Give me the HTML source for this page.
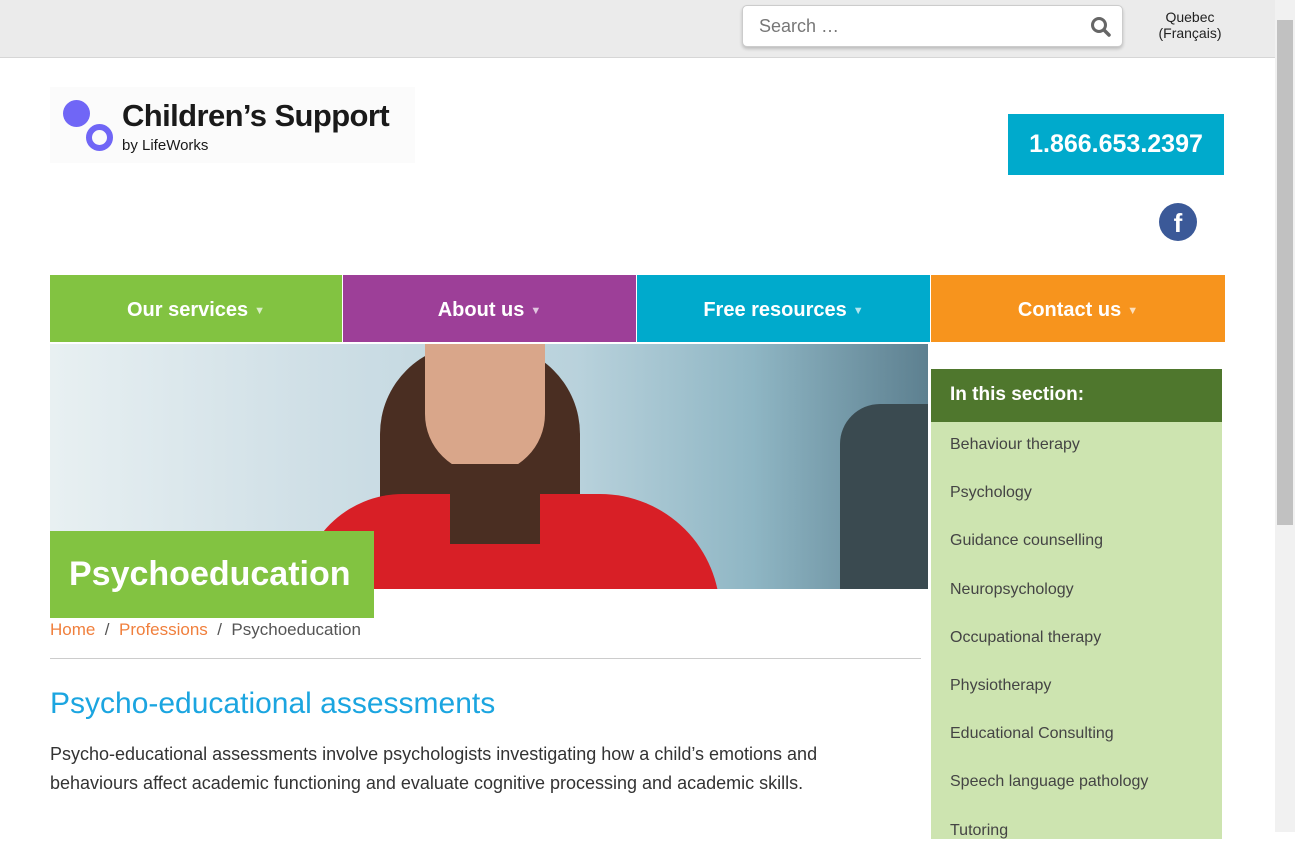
<!DOCTYPE html>
<html><head><meta charset="utf-8"><style>
*{margin:0;padding:0;box-sizing:border-box}
body{width:1295px;height:832px;overflow:hidden;background:#fff;font-family:"Liberation Sans",sans-serif;position:relative;color:#333}
.top{position:absolute;left:0;top:0;width:1275px;height:58px;background:#ebebeb;border-bottom:1px solid #d6d6d6}
.search{position:absolute;left:742px;top:5px;width:381px;height:42px;background:#fff;border:1px solid #ccc;border-radius:5px;box-shadow:0 2px 3px rgba(0,0,0,.2);font-size:18px;color:#777;padding:10px 16px}
.lang{position:absolute;left:1150px;top:9px;width:80px;text-align:center;font-size:14px;line-height:16px;color:#222}
.sb{position:absolute;left:1275px;top:0;width:20px;height:832px;background:#f1f1f1}
.thumb{position:absolute;left:1277px;top:20px;width:16px;height:505px;background:#c1c1c1}
.phone{position:absolute;left:1008px;top:114px;width:216px;height:61px;background:#00aacc;color:#fff;font-size:25px;font-weight:bold;text-align:center;line-height:61px}
.fb{position:absolute;left:1159px;top:203px;width:38px;height:38px;border-radius:50%;background:#3b5998;color:#fff;font-weight:bold;font-size:26px;text-align:center;line-height:40px}
.nav{position:absolute;top:275px;height:67px;color:#fff;font-size:20px;font-weight:bold;text-align:center;line-height:70px}
.nav span{font-size:11px;opacity:.7;margin-left:6px;vertical-align:2px}
.hero{position:absolute;left:50px;top:344px;width:878px;height:245px;background:linear-gradient(90deg,#e8f0f2 0%,#cfdfe6 30%,#b9d2dc 60%,#8fb6c4 80%,#5d8090 100%);overflow:hidden}
.title{position:absolute;left:50px;top:531px;width:324px;height:87px;background:#82c341;color:#fff;font-size:34px;font-weight:bold;padding:24px 19px}
.side{position:absolute;left:931px;top:369px;width:291px;height:470px;background:#cde4b0}
.sideh{background:#4f772d;color:#fff;font-weight:bold;font-size:19px;height:53px;line-height:52px;padding-left:19px}
.side div.i{height:48.2px;padding-left:19px;font-size:16px;color:#444;line-height:46px}
</style></head><body>
<div class="top"></div>
<div class="search">Search …<svg style="position:absolute;right:10px;top:10px" width="22" height="22" viewBox="0 0 22 22"><circle cx="9" cy="9" r="6.5" fill="none" stroke="#666" stroke-width="3"/><line x1="14" y1="14" x2="19" y2="19" stroke="#666" stroke-width="3.5" stroke-linecap="round"/></svg></div>
<div class="lang">Quebec<br>(Français)</div>
<div class="sb"></div><div class="thumb"></div>
<div style="position:absolute;left:50px;top:87px;width:365px;height:76px;background:#fbfbfb"></div>
<div style="position:absolute;left:63px;top:100px;width:27px;height:27px;border-radius:50%;background:#7066f6"></div>
<div style="position:absolute;left:86px;top:124px;width:27px;height:27px;border-radius:50%;border:6px solid #7066f6"></div>
<div style="position:absolute;left:122px;top:98px;font-size:31px;font-weight:bold;color:#1a1a1a;letter-spacing:-.6px">Children’s Support</div>
<div style="position:absolute;left:122px;top:137px;font-size:15px;color:#1a1a1a">by LifeWorks</div>
<div class="phone">1.866.653.2397</div>
<div class="fb">f</div>
<div class="nav" style="left:50px;width:292px;background:#82c341">Our services<span>▼</span></div>
<div class="nav" style="left:343px;width:293px;background:#9d3f98">About us<span>▼</span></div>
<div class="nav" style="left:637px;width:293px;background:#00aacc">Free resources<span>▼</span></div>
<div class="nav" style="left:931px;width:294px;background:#f7941d">Contact us<span>▼</span></div>
<div class="hero">
<div style="position:absolute;left:330px;top:0;width:200px;height:250px;background:#4a2e22;border-radius:90px 90px 0 0"></div>
<div style="position:absolute;left:375px;top:0;width:120px;height:130px;background:#d9a68a;border-radius:0 0 60px 60px"></div>
<div style="position:absolute;left:250px;top:150px;width:420px;height:120px;background:#d81f26;border-radius:120px 140px 0 0"></div>
<div style="position:absolute;left:400px;top:120px;width:90px;height:80px;background:#4a2e22"></div>
<div style="position:absolute;left:790px;top:60px;width:90px;height:190px;background:#3a4a50;border-radius:40px 0 0 0"></div>
</div>
<div class="title">Psychoeducation</div>
<div style="position:absolute;left:50px;top:620px;font-size:17px;color:#555"><span style="color:#f07f3c">Home</span> &nbsp;/&nbsp; <span style="color:#f07f3c">Professions</span> &nbsp;/&nbsp; Psychoeducation</div>
<div style="position:absolute;left:50px;top:658px;width:871px;border-top:1px solid #ccc"></div>
<div style="position:absolute;left:50px;top:687px;font-size:30px;color:#1ba5e0">Psycho-educational assessments</div>
<div style="position:absolute;left:50px;top:740px;width:800px;font-size:18px;line-height:29px;color:#333">Psycho-educational assessments involve psychologists investigating how a child’s emotions and behaviours affect academic functioning and evaluate cognitive processing and academic skills.</div>
<div class="side"><div class="sideh">In this section:</div>
<div class="i">Behaviour therapy</div><div class="i">Psychology</div><div class="i">Guidance counselling</div><div class="i">Neuropsychology</div><div class="i">Occupational therapy</div><div class="i">Physiotherapy</div><div class="i">Educational Consulting</div><div class="i">Speech language pathology</div><div class="i">Tutoring</div></div>
</body></html>
